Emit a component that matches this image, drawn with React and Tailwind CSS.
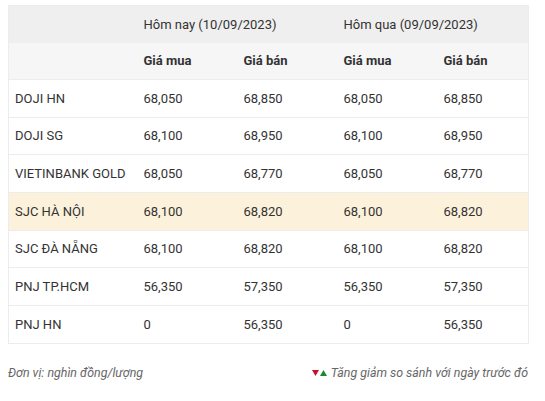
import React from "react";

const rows = [
  { name: "DOJI HN", v: ["68,050", "68,850", "68,050", "68,850"] },
  { name: "DOJI SG", v: ["68,100", "68,950", "68,100", "68,950"] },
  { name: "VIETINBANK GOLD", v: ["68,050", "68,770", "68,050", "68,770"] },
  { name: "SJC HÀ NỘI", v: ["68,100", "68,820", "68,100", "68,820"], hl: true },
  { name: "SJC ĐÀ NẴNG", v: ["68,100", "68,820", "68,100", "68,820"] },
  { name: "PNJ TP.HCM", v: ["56,350", "57,350", "56,350", "57,350"] },
  { name: "PNJ HN", v: ["0", "56,350", "0", "56,350"] },
];

const App = () => {
  return (
    <div
      className="w-[545px] h-[401px] bg-white pt-[5px] px-[8px] text-[#333]"
      style={{ fontFamily: "Roboto, 'Liberation Sans', sans-serif" }}
    >
      <table className="w-[520px] border-collapse table-fixed text-[13px] border border-[#ececec]">
        <colgroup>
          <col className="w-[129px]" />
          <col className="w-[100px]" />
          <col className="w-[100px]" />
          <col className="w-[100px]" />
          <col className="w-[91px]" />
        </colgroup>
        <thead>
          <tr className="bg-[#efefef] h-[37px]">
            <th></th>
            <th colSpan={2} className="text-left font-normal pl-[6px]">
              Hôm nay (10/09/2023)
            </th>
            <th colSpan={2} className="text-left font-normal pl-[6px]">
              Hôm qua (09/09/2023)
            </th>
          </tr>
          <tr className="bg-[#f6f6f6] h-[37px]">
            <th></th>
            <th className="text-left font-bold pl-[6px]">Giá mua</th>
            <th className="text-left font-bold pl-[6px]">Giá bán</th>
            <th className="text-left font-bold pl-[6px]">Giá mua</th>
            <th className="text-left font-bold pl-[6px]">Giá bán</th>
          </tr>
        </thead>
        <tbody>
          {rows.map((r) => (
            <tr
              key={r.name}
              className={`h-[37.7px] border-t border-[#ececec] ${r.hl ? "bg-[#fcf1db]" : "bg-white"}`}
            >
              <td className="pl-[6px] whitespace-nowrap">{r.name}</td>
              {r.v.map((x, i) => (
                <td key={i} className="pl-[6px]">
                  {x}
                </td>
              ))}
            </tr>
          ))}
        </tbody>
      </table>
      <div className="flex justify-between items-center mt-[20px] text-[12.4px] italic text-[#666] w-[520px]">
        <span>Đơn vị: nghìn đồng/lượng</span>
        <span className="flex items-center">
          <svg width="16" height="8" viewBox="0 0 16 8" className="mr-[3px]">
            <polygon points="0,1 7,1 3.5,7" fill="#c8102e" />
            <polygon points="8,7 15,7 11.5,1" fill="#1a8a2e" />
          </svg>
          Tăng giảm so sánh với ngày trước đó
        </span>
      </div>
    </div>
  );
};

export default App;
